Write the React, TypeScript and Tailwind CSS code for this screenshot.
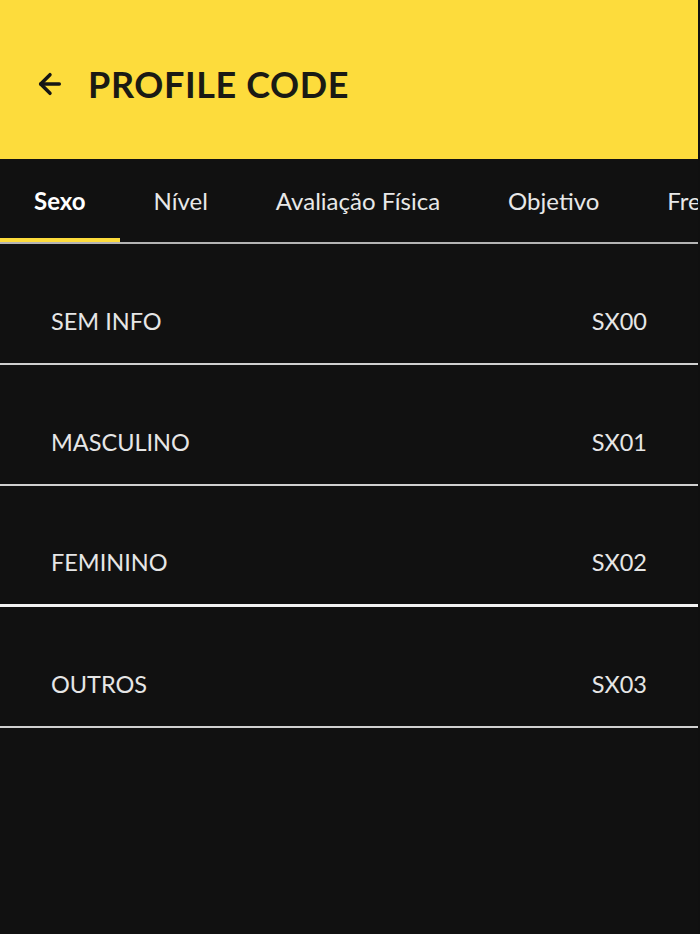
import { ArrowLeft } from "lucide-react";

const tabs = ["Sexo", "Nível", "Avaliação Física", "Objetivo", "Frequência"];

const rows = [
  { label: "SEM INFO", code: "SX00" },
  { label: "MASCULINO", code: "SX01" },
  { label: "FEMININO", code: "SX02" },
  { label: "OUTROS", code: "SX03" },
];

export default function App() {
  return (
    <div
      className="w-[700px] h-[934px] overflow-hidden bg-[#101010]"
      style={{ fontFamily: "Lato, 'Noto Sans', sans-serif" }}
    >
      <div className="w-[698px] h-full flex flex-col bg-[#111111]">
        <header className="h-[159px] shrink-0 bg-[#fddc3c] flex items-center pl-[34px] pt-[8px] gap-[22px]">
          <ArrowLeft className="w-[32px] h-[32px] text-[#151515]" strokeWidth={2.6} />
          <h1 className="text-[36px] font-bold tracking-[0.6px] text-[#1a1a14] leading-none">
            PROFILE CODE
          </h1>
        </header>

        <nav className="h-[85px] shrink-0 flex border-b-[2px] border-[#b4b4b4] overflow-hidden">
          {tabs.map((t, i) => (
            <div
              key={t}
              className={`relative shrink-0 px-[34px] flex items-center text-[24px] whitespace-nowrap ${
                i === 0 ? "font-bold text-white" : "text-[#e8e8e8]"
              }`}
            >
              {t}
              {i === 0 && (
                <span className="absolute left-0 right-0 bottom-[-2px] h-[6px] bg-[#fddc3c]" />
              )}
            </div>
          ))}
        </nav>

        <ul className="flex flex-col">
          {rows.map((r, i) => (
            <li
              key={r.code}
              className={`h-[121px] flex items-center justify-between pl-[51px] pr-[51px] pt-[36px] border-b-[2px] ${
                i === 2 ? "border-[#f2f2f2] border-b-[3px]" : "border-[#d0d0d0]"
              } text-[23.5px] text-[#e6e6e6]`}
            >
              <span>{r.label}</span>
              <span>{r.code}</span>
            </li>
          ))}
        </ul>
      </div>
    </div>
  );
}
